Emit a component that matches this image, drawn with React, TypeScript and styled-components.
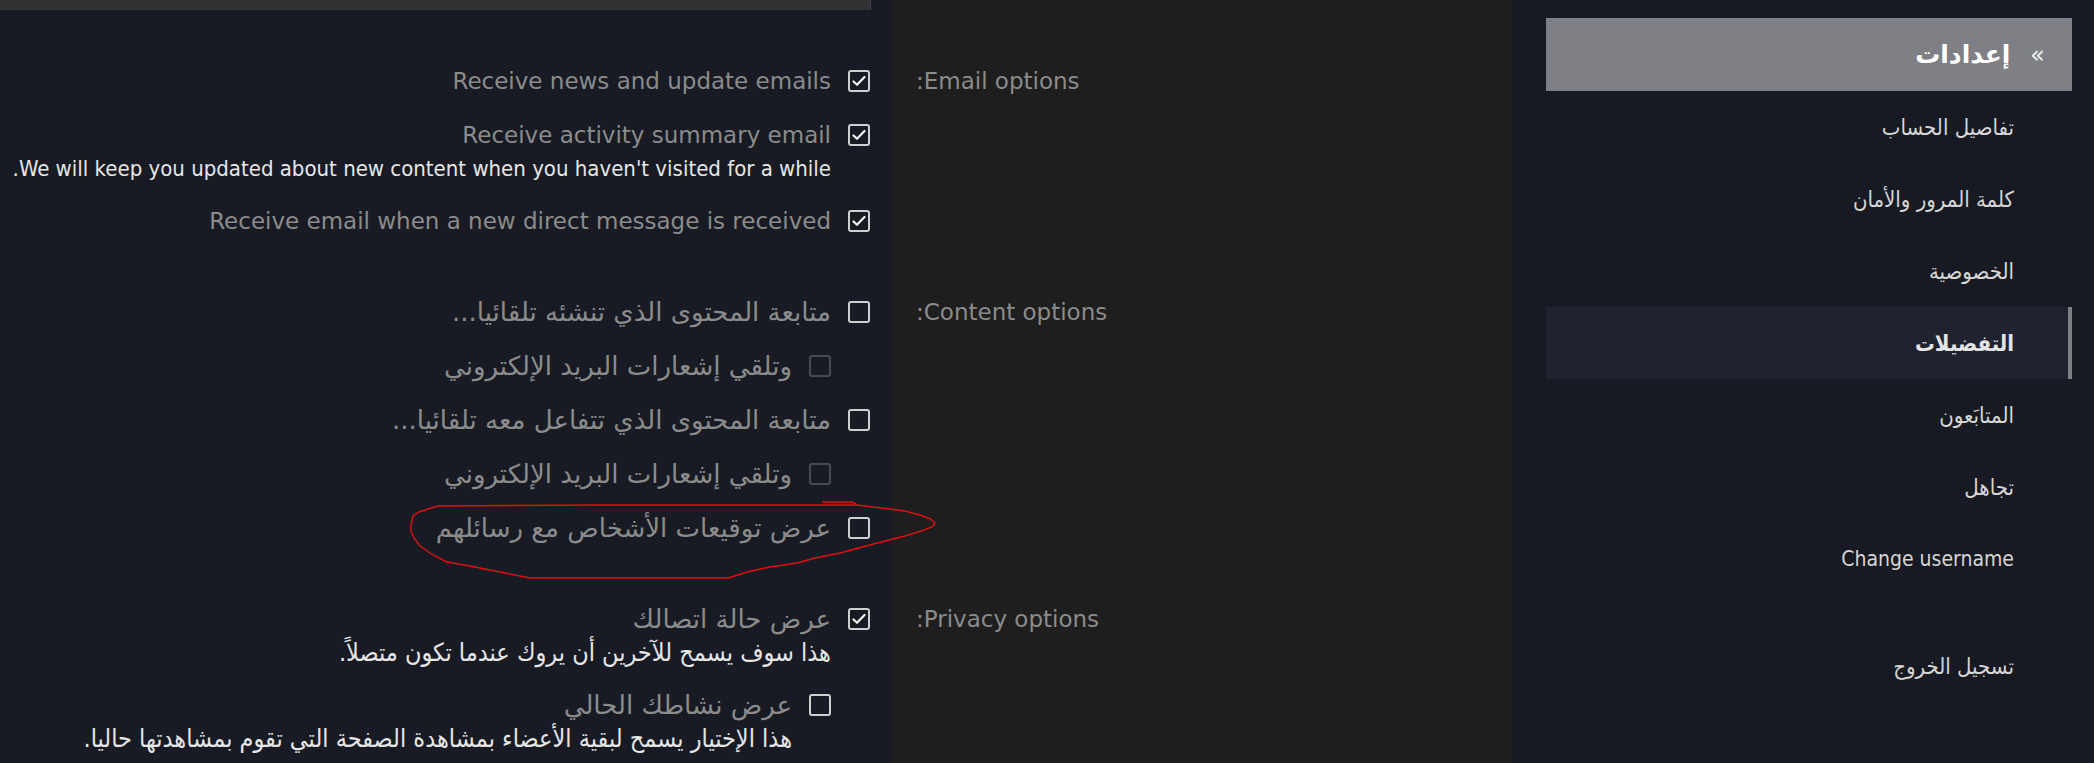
import React from "react";
import styled, { createGlobalStyle } from "styled-components";

const GlobalStyle = createGlobalStyle`
  html, body {
    margin: 0;
    padding: 0;
    background: #171a22;
    overflow: hidden;
  }
  * { box-sizing: border-box; }
`;

const isArabic = (s: string) => /[\u0600-\u06FF]/.test(s);

const Page = styled.div`
  position: relative;
  display: flex;
  width: 2094px;
  height: 763px;
  overflow: hidden;
  background: #171a22;
  font-family: "DejaVu Sans", sans-serif;
`;

const Sidebar = styled.aside`
  width: 583px;
  flex: none;
  background: #171a22;
  padding-top: 18px;
  padding-inline-start: 22px;
`;

const Nav = styled.nav`
  width: 526px;
  display: flex;
  flex-direction: column;
`;

const NavHeader = styled.div`
  height: 73px;
  display: flex;
  align-items: center;
  gap: 20px;
  padding-inline-start: 27px;
  background: #7f8085;
  color: #ffffff;
  font-family: "DejaVu Sans", sans-serif;
  font-weight: bold;
  font-size: 25px;
`;

const Chevron = styled.span`
  font-weight: normal;
  font-size: 24px;
  color: #f2f2f2;
  transform: scaleX(-1);
  line-height: 1;
`;

const NavItem = styled.div<{ $active?: boolean; $ar?: boolean }>`
  height: 72px;
  display: flex;
  align-items: center;
  padding-inline-start: ${(p) => (p.$active ? "54px" : "58px")};
  border-inline-start: ${(p) => (p.$active ? "4px solid #7f8085" : "none")};
  background: ${(p) => (p.$active ? "#1f2330" : "transparent")};
  color: ${(p) => (p.$active ? "#e4e4e4" : "#d6d6d6")};
  font-family: "DejaVu Sans Condensed", "DejaVu Sans", sans-serif;
  font-stretch: condensed;
  font-weight: ${(p) => (p.$active ? "bold" : "normal")};
  font-size: ${(p) => (p.$ar ? "22px" : "21px")};
`;

const NavGap = styled.div`
  height: 35px;
`;

const Main = styled.main`
  flex: 1;
  display: grid;
  grid-template-columns: 619px 892px;
  grid-auto-rows: min-content;
  align-content: start;
  background: linear-gradient(to left, #1e1e1e 619px, #181b23 619px);
`;

const LabelCell = styled.div<{ $top: number; $bottom: number }>`
  background: #1e1e1e;
  padding-top: ${(p) => p.$top}px;
  padding-bottom: ${(p) => p.$bottom}px;
  padding-left: 24px;
  text-align: left;
  color: #8b8b8b;
  font-family: "DejaVu Sans", sans-serif;
  font-size: 23px;
  line-height: 36px;
`;

const OptionsCell = styled.div<{ $top: number; $bottom: number }>`
  background: #181b23;
  padding-top: ${(p) => p.$top}px;
  padding-bottom: ${(p) => p.$bottom}px;
  padding-inline-start: 22px;
  display: flex;
  flex-direction: column;
  gap: 18px;
`;

const TopStrip = styled.div`
  height: 10px;
  margin-inline-start: -1px;
  margin-bottom: 35px;
  width: 871px;
  align-self: flex-end;
  background: #323232;
  border-right: 1px solid #3a3f4c;
`;

const OptionBlock = styled.div<{ $nested?: boolean }>`
  display: flex;
  flex-direction: column;
  margin-inline-start: ${(p) => (p.$nested ? "39px" : "0")};
`;

const OptionRow = styled.label<{ $ar?: boolean }>`
  display: flex;
  align-items: center;
  gap: 17px;
  height: 36px;
  color: #8b8b8b;
  font-family: "DejaVu Sans", sans-serif;
  font-size: ${(p) => (p.$ar ? "26px" : "23px")};
  white-space: nowrap;
`;

const Box = styled.span<{ $dim?: boolean }>`
  flex: none;
  width: 22px;
  height: 22px;
  border: 2px solid ${(p) => (p.$dim ? "#474a53" : "#cfcfcf")};
  border-radius: 3px;
  display: flex;
  align-items: center;
  justify-content: center;
  background: transparent;
`;

const Hint = styled.div<{ $ar?: boolean }>`
  padding-inline-start: 39px;
  color: #e6e6e6;
  font-family: "DejaVu Sans Condensed", "DejaVu Sans", sans-serif;
  font-stretch: condensed;
  font-size: ${(p) => (p.$ar ? "25px" : "22px")};
  line-height: 32px;
  white-space: nowrap;
`;

const Annotation = styled.svg`
  position: absolute;
  left: 0;
  top: 0;
  pointer-events: none;
`;

const Check = () => (
  <svg width="14" height="12" viewBox="0 0 14 12">
    <path d="M1.5 6.5 L5 9.8 L12.5 2" fill="none" stroke="#f4f4f4" strokeWidth="2.2" strokeLinecap="round" strokeLinejoin="round" />
  </svg>
);

type Opt = { text: string; checked?: boolean; nested?: boolean; hint?: string };

const Option = ({ text, checked, nested, hint }: Opt) => (
  <OptionBlock $nested={nested}>
    <OptionRow $ar={isArabic(text)}>
      <Box $dim={nested && !hint}>{checked ? <Check /> : null}</Box>
      <span>{text}</span>
    </OptionRow>
    {hint ? <Hint $ar={isArabic(hint)}>{hint}</Hint> : null}
  </OptionBlock>
);

const navItems = [
  { label: "تفاصيل الحساب" },
  { label: "كلمة المرور والأمان" },
  { label: "الخصوصية" },
  { label: "التفضيلات", active: true },
  { label: "المتابَعون" },
  { label: "تجاهل" },
  { label: "Change username" },
];

const ellipse =
  "411,525 413,516 419,512 428,509 438,506 600,505 857,505 873,507 890,509 905,511 920,515 931,519 935,523 932,527 921,531 905,536 885,541 862,547 840,553 815,558 797,563 770,567 747,572 728,578 530,578 500,572 470,566 447,562 437,557 430,553 420,546 414,538 411,531 411,525";

export default function App() {
  return (
    <>
      <GlobalStyle />
      <Page dir="rtl">
        <Sidebar>
          <Nav>
            <NavHeader>
              <Chevron>«</Chevron>
              <span>إعدادات</span>
            </NavHeader>
            {navItems.map((n) => (
              <NavItem key={n.label} $active={n.active} $ar={isArabic(n.label)}>
                {n.label}
              </NavItem>
            ))}
            <NavGap />
            <NavItem $ar>تسجيل الخروج</NavItem>
          </Nav>
        </Sidebar>
        <Main>
          <LabelCell $top={63} $bottom={28}>Email options:</LabelCell>
          <OptionsCell $top={0} $bottom={28}>
            <TopStrip />
            <Option text="Receive news and update emails" checked />
            <Option
              text="Receive activity summary email"
              checked
              hint="We will keep you updated about new content when you haven't visited for a while."
            />
            <Option text="Receive email when a new direct message is received" checked />
          </OptionsCell>

          <LabelCell $top={27} $bottom={28}>Content options:</LabelCell>
          <OptionsCell $top={27} $bottom={28}>
            <Option text="متابعة المحتوى الذي تنشئه تلقائيا..." />
            <Option text="وتلقي إشعارات البريد الإلكتروني" nested />
            <Option text="متابعة المحتوى الذي تتفاعل معه تلقائيا..." />
            <Option text="وتلقي إشعارات البريد الإلكتروني" nested />
            <Option text="عرض توقيعات الأشخاص مع رسائلهم" />
          </OptionsCell>

          <LabelCell $top={27} $bottom={40}>Privacy options:</LabelCell>
          <OptionsCell $top={27} $bottom={40}>
            <Option
              text="عرض حالة اتصالك"
              checked
              hint="هذا سوف يسمح للآخرين أن يروك عندما تكون متصلاً."
            />
            <Option
              text="عرض نشاطك الحالي"
              nested
              hint="هذا الإختيار يسمح لبقية الأعضاء بمشاهدة الصفحة التي تقوم بمشاهدتها حاليا."
            />
          </OptionsCell>
        </Main>
        <Annotation width="2094" height="763" viewBox="0 0 2094 763">
          <polyline points={ellipse} fill="none" stroke="#e01010" strokeWidth="1.4" />
          <polyline points="822,502 852,502 856,504" fill="none" stroke="#e01010" strokeWidth="1.4" />
        </Annotation>
      </Page>
    </>
  );
}
